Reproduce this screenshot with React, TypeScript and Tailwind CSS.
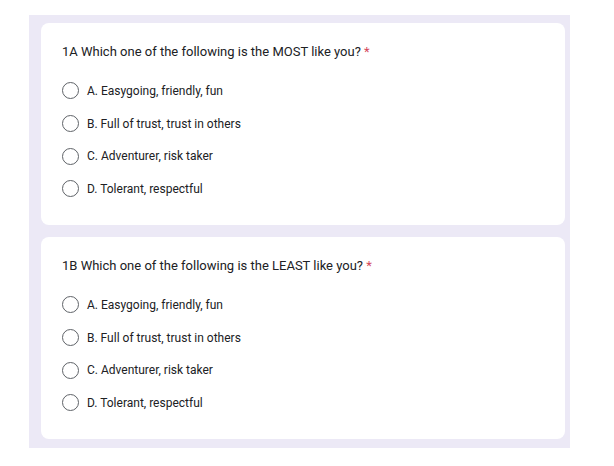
import React from "react";

const options = [
  "A. Easygoing, friendly, fun",
  "B. Full of trust, trust in others",
  "C. Adventurer, risk taker",
  "D. Tolerant, respectful",
];

function Card({ title }: { title: string }) {
  return (
    <div className="w-[524px] h-[202px] bg-white rounded-lg pl-[21px] pt-[19px]">
      <div className="h-[20px] leading-[20px] text-[13px] text-[#202124]">
        {title} <span className="text-[#d4475a]">*</span>
      </div>
      <div className="mt-[12.5px] flex flex-col">
        {options.map((o) => (
          <div key={o} className="h-[32.7px] flex items-center gap-[8px]">
            <div className="w-[17px] h-[17px] rounded-full border-[1.5px] border-[#5f6368] shrink-0" />
            <span className="text-[12px] text-[#202124] leading-[16px]">{o}</span>
          </div>
        ))}
      </div>
    </div>
  );
}

export default function App() {
  return (
    <div
      className="w-[614px] h-[466px] bg-white pt-[15px] pl-[29px]"
      style={{ fontFamily: "Roboto, 'Liberation Sans', sans-serif" }}
    >
      <div className="w-[541px] h-[433px] bg-[#ece9f6] pt-[8px] pl-[12px] flex flex-col gap-[12px]">
        <Card title="1A Which one of the following is the MOST like you?" />
        <Card title="1B Which one of the following is the LEAST like you?" />
      </div>
    </div>
  );
}
